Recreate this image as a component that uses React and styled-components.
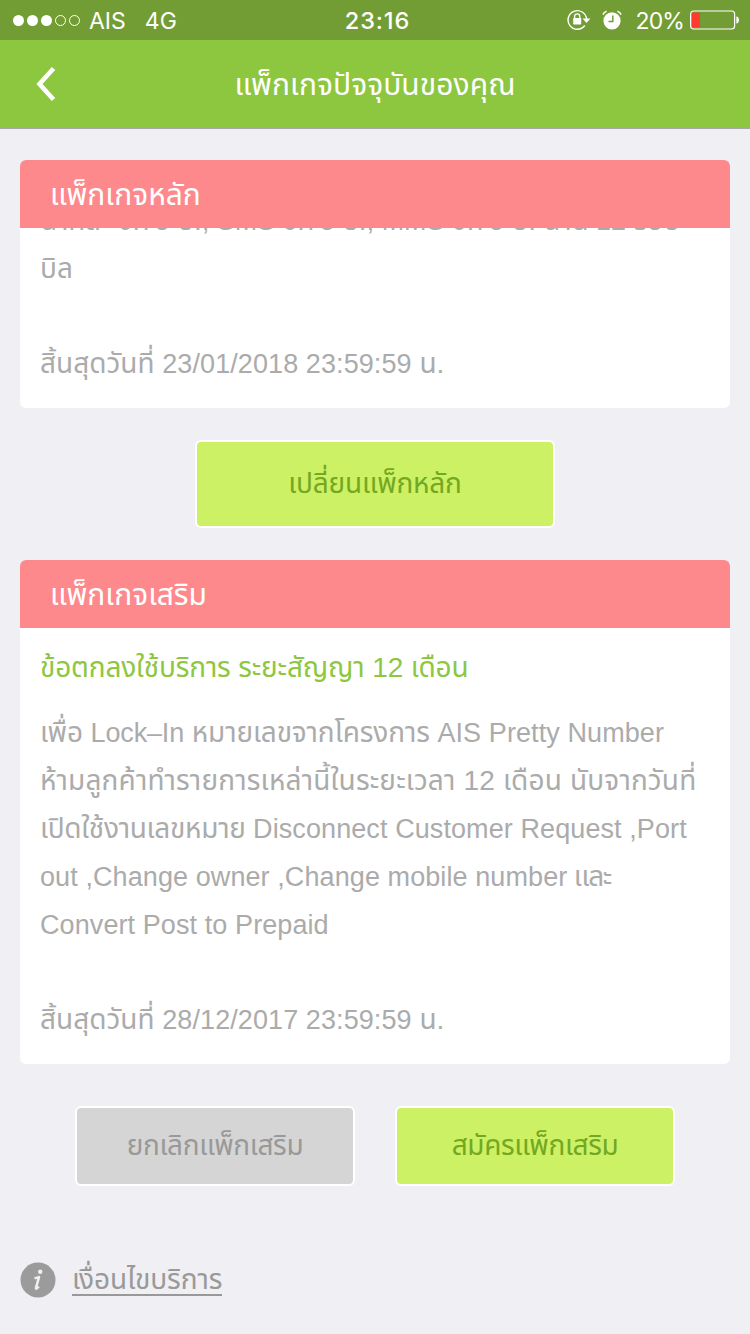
import React from "react";
import styled, { createGlobalStyle } from "styled-components";

const Global = createGlobalStyle`
  * { box-sizing: border-box; }
  body { margin: 0; background: #efeff4; }
`;

const Page = styled.div`
  width: 750px;
  height: 1334px;
  overflow: hidden;
  background: #efeff4;
  font-family: "Liberation Sans", "Noto Sans Thai", "Noto Sans", sans-serif;
  display: flex;
  flex-direction: column;
`;

const StatusBar = styled.header`
  height: 40px;
  flex: none;
  padding: 0 11px 0 13px;
  background: #729d34;
  color: #fff;
  display: grid;
  grid-template-columns: 1fr auto 1fr;
  align-items: center;
  font-family: Inter, "Liberation Sans", sans-serif;
  font-size: 23px;
  line-height: 40px;
`;

const StatusSide = styled.div`
  display: flex;
  align-items: center;
  justify-content: ${(p) => (p.$end ? "flex-end" : "flex-start")};
`;

const Signal = styled.svg`
  width: 68px;
  height: 12px;
  margin-right: 8px;
`;

const StatusText = styled.span`
  height: 40px;
  padding-top: 1px;
  margin-right: ${(p) => p.$gap || 0}px;
  letter-spacing: ${(p) => p.$track || 0}px;
`;

const Clock = styled(StatusText)`
  padding-left: 3px;
  font-size: 23.5px;
  font-weight: 550;
`;

const StatusIcon = styled.svg`
  width: ${(p) => p.$width}px;
  height: ${(p) => p.$height}px;
  margin-right: ${(p) => p.$gap || 0}px;
  flex: none;
`;

const NavBar = styled.nav`
  height: 89px;
  flex: none;
  background: #8dc73f;
  border-bottom: 1px solid #a6a6ab;
  display: grid;
  grid-template-columns: 96px 1fr 96px;
  align-items: center;
`;

const BackIcon = styled.svg`
  width: 20px;
  height: 36px;
  margin-left: 36px;
  display: block;
`;

const Title = styled.h1`
  margin: 0;
  padding-top: 4px;
  text-align: center;
  color: #fff;
  font-size: 30px;
  font-weight: 400;
  letter-spacing: 0.05px;
`;

const Content = styled.main`
  padding: 31px 20px 0;
  display: flex;
  flex-direction: column;
`;

const Card = styled.section`
  height: ${(p) => p.$height}px;
  flex: none;
  background: #fff;
  border-radius: 6px;
  overflow: hidden;
  display: flex;
  flex-direction: column;
`;

const CardHead = styled.h2`
  margin: 0;
  height: 68px;
  flex: none;
  padding: 1px 30px 0;
  background: #fe898c;
  color: #fff;
  font-size: 30px;
  font-weight: 400;
  line-height: 67px;
`;

const CardBody = styled.div`
  flex: 1;
  min-height: 0;
  padding: 0 20px 20px;
  overflow: hidden;
  display: flex;
  flex-direction: column;
  justify-content: flex-end;
`;

const PackageName = styled.h3`
  margin: 0 0 17px;
  flex: none;
  height: 48px;
  line-height: 48px;
  font-size: 28px;
  font-weight: 400;
  color: #8dc73f;
  white-space: nowrap;
  letter-spacing: -0.15px;
`;

const Line = styled.div`
  flex: none;
  height: 48px;
  line-height: 48px;
  font-size: 28px;
  color: #ababab;
  white-space: nowrap;
  letter-spacing: ${(p) => p.$track || 0}px;
`;

const EndDate = styled(Line)`
  margin-top: 47px;
`;

const Latin = styled.span`
  font-size: 27px;
  letter-spacing: ${(p) => p.$track ?? 0.09}px;
`;

const Actions = styled.div`
  display: flex;
  justify-content: center;
  gap: 40px;
  padding: ${(p) => p.$pad};
`;

const Button = styled.button`
  width: ${(p) => (p.$large ? 360 : 280)}px;
  height: ${(p) => (p.$large ? 88 : 80)}px;
  padding: 0;
  border: 2px solid #fff;
  border-radius: 6px;
  background: ${(p) => (p.$muted ? "#d5d5d5" : "#cdf164")};
  color: ${(p) => (p.$muted ? "#999999" : "#74a822")};
  font-family: inherit;
  font-size: 28px;
  line-height: 40px;
  letter-spacing: ${(p) => (p.$large ? -0.2 : -0.35)}px;
`;

const Terms = styled.div`
  display: flex;
  align-items: center;
  gap: 16px;
  padding-top: 76px;
`;

const InfoIcon = styled.svg`
  width: 36px;
  height: 36px;
`;

const TermsLink = styled.a`
  height: 32px;
  line-height: 32px;
  border-bottom: 2px solid #999;
  color: #999;
  font-size: 28px;
  letter-spacing: -0.1px;
  white-space: nowrap;
`;

export default function App() {
  return (
    <Page>
      <Global />
      <StatusBar>
        <StatusSide>
          <Signal viewBox="0 0 68 12">
            {[0, 1, 2].map((i) => (
              <circle key={i} cx={5.5 + i * 14} cy="6.5" r="5.5" fill="#fff" />
            ))}
            {[3, 4].map((i) => (
              <circle key={i} cx={5.5 + i * 14} cy="6.5" r="5" fill="none" stroke="#fff" />
            ))}
          </Signal>
          <StatusText $gap={19}>AIS</StatusText>
          <StatusText>4G</StatusText>
        </StatusSide>
        <Clock $track={0.9}>23:16</Clock>
        <StatusSide $end>
          <StatusIcon $width={24} $height={22} $gap={11} viewBox="0 0 24 22">
            <path d="M17.8 16.5A9.3 9.3 0 1 1 19.6 10" fill="none" stroke="#fff" strokeWidth="1.4" />
            <path d="M15.6 9.5h7.8l-3.9 4.4z" fill="#fff" />
            <rect x="6.2" y="9" width="8" height="6.4" rx="0.6" fill="#fff" />
            <path d="M7.6 9.5V7.4a2.6 2.6 0 0 1 5.2 0v2.1" fill="none" stroke="#fff" strokeWidth="1.3" />
          </StatusIcon>
          <StatusIcon $width={20} $height={20} $gap={14} viewBox="0 0 20 20">
            <circle cx="10" cy="10.8" r="8.6" fill="#fff" />
            <path d="M.9 4.6A6 6 0 0 1 4.6 1.3M19.1 4.6A6 6 0 0 0 15.4 1.3" fill="none" stroke="#fff" strokeWidth="1.6" />
            <path d="M10.8 5.5v6H6.5" fill="none" stroke="#729d34" strokeWidth="1.5" />
          </StatusIcon>
          <StatusText $gap={6} $track={-0.9}>20%</StatusText>
          <StatusIcon $width={49} $height={20} viewBox="0 0 49 20">
            <rect x="0.6" y="1" width="44" height="18" rx="3" fill="none" stroke="#fff" strokeWidth="1.2" />
            <rect x="2" y="2.5" width="8" height="15" rx="1" fill="#ff3b30" />
            <path d="M46.3 6.5c1.8.2 2.7 1.6 2.7 3.5s-.9 3.3-2.7 3.5z" fill="#fff" />
          </StatusIcon>
        </StatusSide>
      </StatusBar>
      <NavBar>
        <BackIcon viewBox="0 0 20 36">
          <path d="M17.5 2.5L3.5 18L17.5 33.5" fill="none" stroke="#fff" strokeWidth="4.6" />
        </BackIcon>
        <Title>แพ็กเกจปัจจุบันของคุณ</Title>
      </NavBar>
      <Content>
        <Card $height={248}>
          <CardHead>แพ็กเกจหลัก</CardHead>
          <CardBody>
            <Line $track={-0.2}>
              นาทีละ <Latin $track={-0.1}>0.75</Latin> บ., <Latin $track={-0.1}>SMS 0.75</Latin> บ.,{" "}
              <Latin $track={-0.1}>MMS 0.75</Latin> บ. นาน <Latin>12</Latin> รอบ
            </Line>
            <Line>บิล</Line>
            <EndDate>
              สิ้นสุดวันที่ <Latin>23/01/2018 23:59:59</Latin> น.
            </EndDate>
          </CardBody>
        </Card>
        <Actions $pad="32px 0">
          <Button $large>เปลี่ยนแพ็กหลัก</Button>
        </Actions>
        <Card $height={504}>
          <CardHead>แพ็กเกจเสริม</CardHead>
          <CardBody>
            <PackageName>ข้อตกลงใช้บริการ ระยะสัญญา 12 เดือน</PackageName>
            <Line $track={-0.12}>
              เพื่อ <Latin $track={-0.15}>Lock–In</Latin> หมายเลขจากโครงการ <Latin $track={0.09}>AIS Pretty Number</Latin>
            </Line>
            <Line $track={0.16}>ห้ามลูกค้าทำรายการเหล่านี้ในระยะเวลา 12 เดือน นับจากวันที่</Line>
            <Line $track={-0.28}>
              เปิดใช้งานเลขหมาย <Latin>Disconnect Customer Request ,Port</Latin>
            </Line>
            <Line $track={-1.3}>
              <Latin>out ,Change owner ,Change mobile number</Latin> และ
            </Line>
            <Line>
              <Latin>Convert Post to Prepaid</Latin>
            </Line>
            <EndDate>
              สิ้นสุดวันที่ <Latin>28/12/2017 23:59:59</Latin> น.
            </EndDate>
          </CardBody>
        </Card>
        <Actions $pad="42px 0 0">
          <Button $muted>ยกเลิกแพ็กเสริม</Button>
          <Button>สมัครแพ็กเสริม</Button>
        </Actions>
        <Terms>
          <InfoIcon viewBox="0 0 36 36">
            <circle cx="18" cy="18" r="17.5" fill="#9b9b9b" />
            <circle cx="20.2" cy="9.8" r="2.2" fill="#efeff4" />
            <path d="M14.5 16.4l4.5-1.3-3 10.6c-.3 1.5.9 1.2 2.8-1.2" fill="none" stroke="#efeff4" strokeWidth="2.5" strokeLinejoin="round" />
          </InfoIcon>
          <TermsLink>เงื่อนไขบริการ</TermsLink>
        </Terms>
      </Content>
    </Page>
  );
}
